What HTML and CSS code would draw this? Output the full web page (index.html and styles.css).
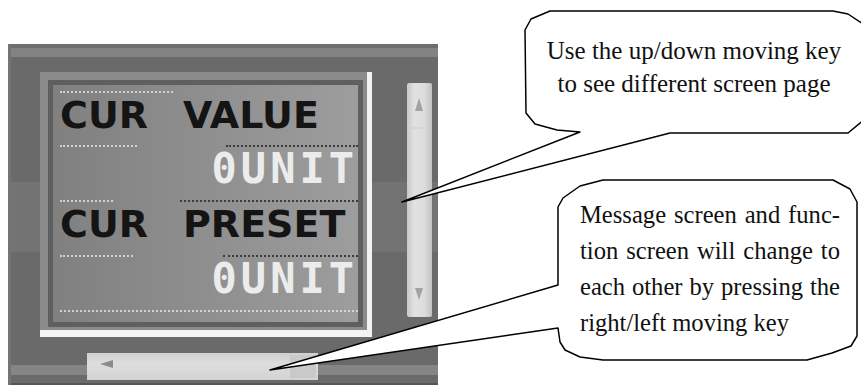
FILE: index.html
```html
<!DOCTYPE html>
<html lang="en">
<head>
    <meta charset="UTF-8">
    <meta name="viewport" content="width=device-width, initial-scale=1.0">
    <title>Message Screen</title>
    <link rel="stylesheet" href="styles.css">
</head>
<body>
    <div class="stage">
        <div class="panel">
            <div class="screen-row">
                <div class="frame">
                    <div class="lcd">
                        <div class="rule"><i class="lt w113"></i></div>
                        <div class="row label"><span>CUR</span><span>VALUE</span></div>
                        <div class="rule"><i class="lt w77"></i><i class="dk w132"></i></div>
                        <div class="row value">0UNIT</div>
                        <div class="rule"><i class="lt w53"></i><i class="dk w178"></i></div>
                        <div class="row label"><span>CUR</span><span>PRESET</span></div>
                        <div class="rule"><i class="lt w73"></i><i class="dk w135"></i></div>
                        <div class="row value">0UNIT</div>
                        <div class="rule"><i class="lt w298"></i></div>
                    </div>
                </div>
                <div class="vscroll">
                    <svg width="25" height="234" viewBox="0 0 25 234">
                        <polygon points="12,15 8,28 16,28" fill="#a2a2a2"/>
                        <line x1="4" y1="45" x2="21" y2="45" stroke="#cfcfcf"/>
                        <polygon points="8,205 16,205 12,217" fill="#a2a2a2"/>
                    </svg>
                </div>
            </div>
            <div class="bottom">
                <div class="hscroll">
                    <svg width="231" height="27" viewBox="0 0 231 27">
                        <polygon points="13,11 26,7 26,15" fill="#8c8c8c"/>
                        <rect x="203" y="2" width="26" height="23" fill="#c9c9c9"/>
                    </svg>
                </div>
            </div>
        </div>

        <!-- callout outlines with their tails -->
        <svg class="callouts" width="861" height="388" viewBox="0 0 861 388">
            <polygon points="550,11 833,11 848,14 866,26 866,118 848,133 670,133 402,202 580,132 557,130 535,124 526,113 525,30 531,19"
                     fill="#fff" stroke="#000" stroke-width="1.5" stroke-linejoin="round"/>
            <polygon points="603,180 833,180 850,189 857,202 857,336 851,346 832,353 807,360 603,360 580,357 565,350 560,342 558,328 270,370 558,285 558,207 563,198 580,186"
                     fill="#fff" stroke="#000" stroke-width="1.5" stroke-linejoin="round"/>
        </svg>

        <div class="note note-top">
            <span>Use the up/down moving key</span>
            <span>to see different screen page</span>
        </div>
        <div class="note note-bottom">
            <span class="just">Message screen and func-</span>
            <span class="just">tion screen will change to</span>
            <span class="just">each other by pressing the</span>
            <span>right/left moving key</span>
        </div>
    </div>
</body>
</html>
```

FILE: styles.css
```css
body {
    margin: 0;
    background: #fff;
    font-family: "Liberation Serif", "Times New Roman", serif;
}
.stage {
    position: relative;
    width: 861px;
    height: 388px;
    overflow: hidden;
}
.panel {
    margin: 44px 0 0 8px;
    width: 430px;
    height: 341px;
    background:
        linear-gradient(to bottom, transparent 138px, rgba(255,255,255,0.06) 138px 208px, transparent 208px),
        linear-gradient(to bottom, #6e6e6e 0 4px, #838383 4px 13px, #6a6a6a 13px);
    border-left: 3px solid #747474;
    box-sizing: border-box;
}
.screen-row {
    display: flex;
    align-items: flex-start;
    padding: 28px 0 0 29px;
}
.frame {
    width: 332px;
    height: 265px;
    box-sizing: border-box;
    background: #8b8b8b;
    border-right: 5px solid #f2f2f2;
    border-bottom: 7px solid #f4f4f4;
    padding: 8px 4px 3px 8px;
}
.lcd {
    height: 100%;
    box-sizing: border-box;
    border: 5px solid #5f5f5f;
    background: linear-gradient(90deg, #808080, #9d9d9d);
    padding: 6px 0 0 7px;
}
.rule {
    display: flex;
    justify-content: space-between;
    height: 2px;
}
.rule i {
    display: block;
    height: 0;
}
.lt { border-top: 2px dotted rgba(235,235,235,0.75); }
.dk { border-top: 2px dotted #3c3c3c; }
.w53 { width: 53px; }
.w73 { width: 73px; }
.w77 { width: 77px; }
.w113 { width: 113px; }
.w132 { width: 132px; }
.w135 { width: 135px; }
.w178 { width: 178px; }
.w298 { width: 298px; }
.row {
    height: 52px;
    line-height: 44px;
}
.row + .rule + .row { height: 53px; }
.label {
    display: flex;
    gap: 35px;
    font-family: "DejaVu Sans", sans-serif;
    font-weight: bold;
    font-size: 38px;
    color: #141414;
}
.value {
    text-align: right;
    font-family: "DejaVu Sans Mono", monospace;
    font-weight: bold;
    font-size: 42px;
    letter-spacing: 4px;
    color: #ececec;
}
.vscroll {
    margin: 11px 0 0 35px;
    width: 25px;
    height: 234px;
    box-sizing: border-box;
    background: linear-gradient(90deg, #c9c9c9, #e2e2e2 30%, #dcdcdc 70%, #c2c2c2);
    border-radius: 2px;
}
.vscroll svg, .hscroll svg { display: block; }
.bottom {
    height: 32px;
    margin-top: 16px;
    padding-left: 76px;
    background: linear-gradient(to bottom, transparent 12px, #858585 12px 22px, #6a6a6a 22px 30px, #555 30px);
}
.hscroll {
    width: 231px;
    height: 27px;
    background: linear-gradient(to bottom, #cfcfcf, #dedede 40%, #d2d2d2);
}
.callouts {
    position: absolute;
    left: 0;
    top: 0;
}
.note {
    position: absolute;
    font-family: "Liberation Serif", "DejaVu Serif", serif;
    color: #111;
}
.note span { display: block; }
.note-top {
    left: 530px;
    top: 34px;
    width: 328px;
    font-size: 25px;
    text-align: center;
    line-height: 33px;
}
.note-bottom {
    left: 580px;
    top: 197px;
    width: 260px;
    font-size: 24.6px;
    line-height: 36px;
}
.just {
    text-align: justify;
    text-align-last: justify;
}
```
